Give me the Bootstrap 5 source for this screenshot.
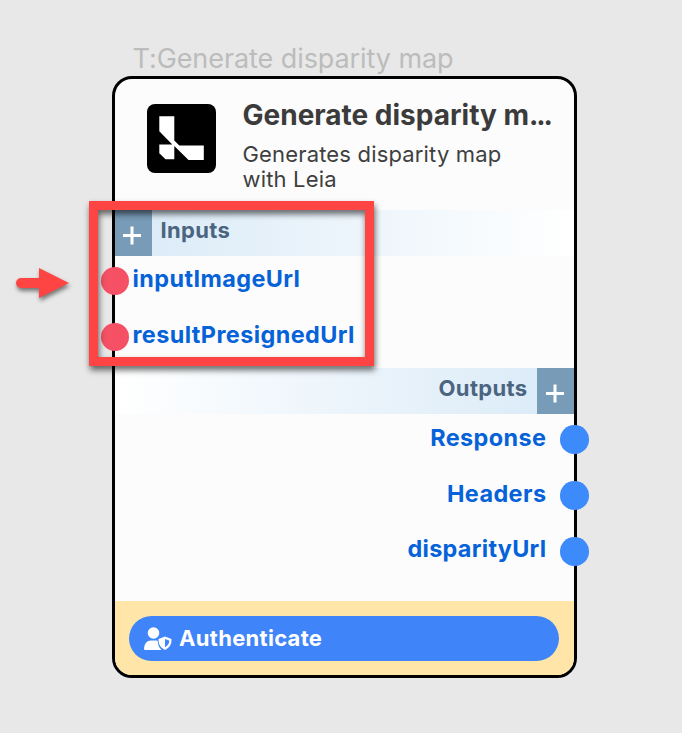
<!DOCTYPE html>
<html lang="en">
<head>
<meta charset="utf-8">
<meta name="viewport" content="width=device-width, initial-scale=1">
<title>Generate disparity map</title>
<link rel="stylesheet" href="https://cdn.jsdelivr.net/npm/bootstrap@5.3.0/dist/css/bootstrap.min.css">
<style>
  body { background: #e8e8e8; font-family: Inter, "Liberation Sans", sans-serif; width: 682px; height: 733px; overflow: hidden; }
  .node-wrap { width: 465px; margin-left: 112px; padding-top: 41px; }
  .node-caption { height: 35px; line-height: 35px; padding-left: 20.5px; font-size: 27px; letter-spacing: -.08px; color: #bcbcbc; white-space: nowrap; }
  .node-card { height: 602px; border: 3px solid #000; border-radius: 20px; background: #fcfcfc; }
  .node-head { height: 131px; padding: 25px 0 0 32px; gap: 27px; }
  .node-title { font-size: 28px; line-height: 34px; font-weight: 700; color: #3b3b3b; margin-top: -6px; margin-left: -.5px; white-space: nowrap; }
  .title-dots { letter-spacing: -2.1px; }
  .node-desc { font-size: 22px; letter-spacing: .17px; line-height: 25px; color: #3f3f3f; margin-top: 10px; margin-left: -.5px; }
  .section-bar { height: 46px; font-size: 22px; letter-spacing: .35px; font-weight: 700; color: #4b6581; line-height: 41px; }
  .bar-in { background: linear-gradient(90deg, #d9eaf7, #fff); gap: 8.5px; }
  .bar-out { background: linear-gradient(270deg, #d9eaf7, #fff); gap: 9.5px; }
  .plus-box { width: 37px; background: #789bb7; }
  .bar-in .plus-box { padding-right: 3px; }
  .bar-out .plus-box { padding-right: 1px; }
  .port { position: relative; height: 56px; line-height: 46px; font-size: 23.4px; letter-spacing: .42px; font-weight: 700; color: #0562d8; }
  .port-in { padding-left: 17.5px; }
  .port-out { padding-right: 27.600px; line-height: 48px; }
  .port-out:nth-last-child(2) { line-height: 46px; letter-spacing: .3px; }
  .port-dot { position: absolute; width: 28.5px; height: 28.5px; border-radius: 50%; }
  .port-in .port-dot { left: -14.4px; top: 10.6px; background: #f55064; }
  .port-out .port-dot { right: -14.6px; top: 11.2px; background: #3d8afa; }
  .node-foot { height: 74px; background: #ffe6a8; border-radius: 0 0 17px 17px; padding: 14.5px 15px 14.5px 14px; }
  .auth-btn { background: #3f84f8; color: #fff; font-size: 22px; letter-spacing: .3px; line-height: 33px; font-weight: 700; padding: 0 0 0 14px; border: 0; gap: 6px; }
  .callout-box { position: absolute; left: 89px; top: 201px; width: 285px; height: 165px; border: 9px solid #ff4444; filter: drop-shadow(1px 4px 3px rgba(0,0,0,.6)); }
  .callout-arrow { position: absolute; left: 10px; top: 260px; filter: drop-shadow(1px 3px 2px rgba(0,0,0,.5)); }
</style>
<script src="https://cdn.jsdelivr.net/npm/bootstrap@5.3.0/dist/js/bootstrap.bundle.min.js"></script>
</head>
<body class="position-relative">
<main class="node-wrap">
  <div class="node-caption"><span>T:Generate disparity map</span></div>
  <div class="card node-card">
    <div class="node-head d-flex align-items-start flex-shrink-0">
      <svg width="69" height="69" viewBox="0 0 69 69" class="flex-shrink-0">
        <rect width="69" height="69" rx="8" fill="#000"/>
        <path fill="#fff" d="M12.300 12.300H27.300V36.500L32.300 41.500H56.800V56H41.500L27.300 42V55.300H18.500L12.300 49.300V40.500H25.300L12.300 27.300Z"/>
      </svg>
      <div>
        <div class="node-title">Generate disparity m<span class="title-dots">...</span></div>
        <div class="node-desc">Generates disparity map<br>with Leia</div>
      </div>
    </div>
    <div class="section-bar bar-in d-flex flex-shrink-0">
      <div class="plus-box d-flex align-items-center justify-content-center">
        <svg width="20" height="24" viewBox="0 0 20 24"><path d="M1 14.500H19M10 5.500V23.500" stroke="#fff" stroke-width="3"/></svg>
      </div>
      <span>Inputs</span>
    </div>
    <div class="port port-in"><i class="port-dot"></i><span>inputImageUrl</span></div>
    <div class="port port-in"><i class="port-dot"></i><span>resultPresignedUrl</span></div>
    <div class="section-bar bar-out d-flex flex-shrink-0 justify-content-end">
      <span>Outputs</span>
      <div class="plus-box d-flex align-items-center justify-content-center">
        <svg width="20" height="24" viewBox="0 0 20 24"><path d="M1 14.500H19M10 5.500V23.500" stroke="#fff" stroke-width="3"/></svg>
      </div>
    </div>
    <div class="port port-out text-end"><i class="port-dot"></i><span>Response</span></div>
    <div class="port port-out text-end"><i class="port-dot"></i><span>Headers</span></div>
    <div class="port port-out text-end"><i class="port-dot"></i><span>disparityUrl</span></div>
    <div class="node-foot mt-auto d-flex">
      <button type="button" class="btn rounded-pill auth-btn flex-fill d-flex align-items-center">
        <svg width="30" height="24" viewBox="0 0 30 24" fill="#fff">
          <circle cx="10.500" cy="7" r="5.800"/>
          <path d="M2 24Q1 24 1 22.500Q1.500 14.800 8 14.500H13Q14 14.500 14.700 14.800Q14.700 20.500 18.500 24Z"/>
          <path d="M22 10.500L28.500 13Q29 20.500 22 24Q15 20.500 15.500 13Z"/>
          <path d="M22 13V21.200Q26.500 18.700 26.200 14.600Z" fill="#3f84f8"/>
        </svg>
        <span>Authenticate</span>
      </button>
    </div>
  </div>
</main>
<div class="callout-box"></div>
<svg class="callout-arrow" width="62" height="46" viewBox="0 0 62 46"><path d="M11 23H32" stroke="#ff4444" stroke-width="10" stroke-linecap="round"/><path d="M29 8L59 23L29 38Z" fill="#ff4444"/></svg>
</body>
</html>
